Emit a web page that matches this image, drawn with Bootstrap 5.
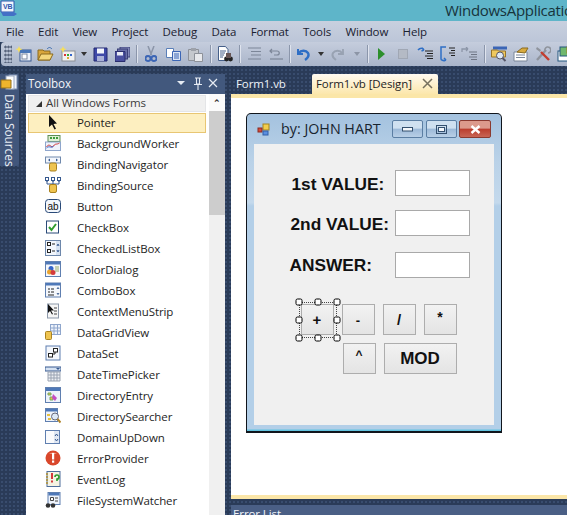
<!DOCTYPE html>
<html lang="en">
<head>
<meta charset="utf-8">
<title>WindowsApplication</title>
<link href="https://cdn.jsdelivr.net/npm/bootstrap@5.3.0/dist/css/bootstrap.min.css" rel="stylesheet">
<style>
html,body{height:515px;width:567px;overflow:hidden;margin:0}
body{font-family:"Open Sans","Noto Sans",sans-serif;font-size:11.5px;letter-spacing:-.1px;color:#1e1e1e;background:#2b3c59}
.dots{height:515px;background-color:#2a3b58;background-image:radial-gradient(#3a4e70 .7px,transparent .8px);background-size:4px 4px}
.ttl{height:21px;background:#5eb5c9;flex:none}
.ttl span{font-size:15px;letter-spacing:-.3px;color:#17333b;margin-left:auto;white-space:nowrap;width:122px;overflow:hidden;line-height:20px}
.mnu{height:21px;background:linear-gradient(#c8d0df,#bcc6d8);flex:none;padding-left:6px;gap:14.3px;line-height:21px;color:#1a2130}
.tbar{height:24px;background:linear-gradient(#c5cddd,#aab5ca);flex:none;padding-left:3px;border-radius:4px 0 0 4px;margin-left:1px}
.tlb{width:22px;height:22px;flex:none}
.arr{flex:none;height:22px}
.arr::after{content:"";border:3.5px solid transparent;border-top:4px solid #333;border-bottom:0}
.arr.off::after{border-top-color:#8c95a6}
.sepv{flex:none;height:22px}
.sepv::after{content:"";width:1px;height:18px;background:#8b96ab;box-shadow:1px 0 #dfe4ee}
.w5{width:5px}.w6{width:6px}.w7{width:7px}.w8{width:8px}.w11{width:11px}.w13{width:13px}.w15{width:15px}
.grip{width:8px;flex:none;height:18px;background:radial-gradient(#58647c 1px,transparent 1.2px) 0 0/3px 4px}
.work{height:449px;padding-top:8px;overflow:hidden}
.rail{width:19px;height:92px;background:#41567b;flex:none;margin-right:7px;border-radius:0 2px 2px 0}
.vtxt{writing-mode:vertical-rl;color:#e8edf5;font-size:12px;line-height:19px;margin-top:3px}
.tbox{width:199px;flex:none;background:#fff}
.thead{height:20px;background:#42587d;color:#f2f5fa;font-size:11.7px;line-height:19px;padding-left:2px}
.tbody{height:427px;overflow:hidden}
.tlist{width:183px;flex:none;padding:1px 2px 0;overflow:hidden}
.tgroup{height:17px;background:#f0f0f0;border:1px solid #e4e5e7;line-height:14px;color:#3c3c3c;margin-bottom:1px;margin-right:1px;padding-left:7px;white-space:nowrap}
.tgroup i{display:inline-block;border-style:solid;border-width:0 0 6px 6px;border-color:transparent transparent #333 transparent;margin-right:4px;width:0;height:0}
.trow{height:21px;line-height:21px;padding-left:17px;gap:16px;white-space:nowrap;margin-right:1px}
.trow svg{width:16px;height:16px;flex:none}
.trow.hot{background:#fdefc0;border:1px solid #e8c673;height:20px;line-height:18px;padding-left:16px}
.tscroll{width:16px;background:#f0f0f0;flex:none}
.tscroll b{display:block;height:17px;color:#333;font-size:9px;text-align:center;line-height:17px;background:#fbfbfb}
.tscroll u{display:block;height:104px;background:#cdcdcd}
.main{margin-left:6px;flex:1;min-width:0}
.tabs{height:20px;line-height:20px;flex:none}
.dtab{color:#eef2f8;padding-left:5px;width:81px;flex:none;white-space:nowrap}
.atab{width:126px;flex:none;background:linear-gradient(#fffaf0,#fce7ac);border-radius:2px 2px 0 0;color:#1e1e1e;padding-left:4px;white-space:nowrap}
.ybar{height:4px;background:#fbe6a8;flex:none}
.canvas{height:397px;background:#fff;position:relative;flex:none}
.ebar{height:6px;flex:none}
.elist{height:10px;background:#4a5f85;color:#f2f5fa;line-height:17px;padding-left:2px;overflow:hidden;flex:none}
.frm{position:absolute;left:15px;top:15px;width:256px;height:320px;border:1.5px solid #10151c;border-bottom-width:2px;border-radius:5px 5px 0 0;background:linear-gradient(#a4c2df,#bad2e8 15%,#c4d9ec 28%,#b3cfe8 29%,#b3cfe8);box-shadow:inset 0 -1.5px #63c3df}
.frmbar{height:30px;padding-left:10px}
.fname{font-size:14.3px;letter-spacing:0;color:#18242f;margin-left:11px;white-space:nowrap;line-height:18px;width:111px}
.wbtn{width:31px;height:18px;border:1px solid #5b7ea3;border-radius:2px;margin-right:2.5px;background:linear-gradient(#cfe0f0 45%,#9cb9d8 50%,#b8cfe6)}
.wbtn.cl{background:linear-gradient(#dc9a8c 45%,#bb3d2d 50%,#c86555);border-color:#8a3a30;width:32px}
.client{position:absolute;left:6.5px;top:29.5px;width:240px;height:281px;background:#f0f0f0}
.lab{position:absolute;font-family:"Liberation Sans",sans-serif;font-weight:700;font-size:17.3px;letter-spacing:0;color:#111;line-height:20px;white-space:nowrap}
.l1{left:38px;top:30px}.l2{left:37px;top:70px}.l3{left:36px;top:111px}
.tbx{position:absolute;left:141px;width:75px;height:26px;background:#fff;border:1px solid #a9a9a9}
.t1{top:26px}.t2{top:66px}.t3{top:108px}
.fbt{position:absolute;border:1px solid #adadad;background:linear-gradient(#f2f2f2,#e4e4e4);font-family:"Liberation Sans",sans-serif;font-weight:700;letter-spacing:0;color:#111;font-size:15px;height:31px;width:33px;line-height:29px;text-align:center}
.b1{left:47px;top:160px}.b2{left:88px;top:160px;line-height:31px;font-size:13px}.b3{left:129px;top:160px}.b4{left:170px;top:160px;line-height:25px;font-size:14px}.b5{left:89px;top:199px;line-height:23px;font-size:12px}.b6{left:130px;top:199px;width:73px;font-size:17px}
.selb{position:absolute;left:45px;top:158px;width:38px;height:36px;border:1px dotted #444}
.hnd{position:absolute;width:7px;height:7px;background:#fff;border:1.2px solid #000;border-radius:2px;transform:translate(-50%,-50%)}
.h1{left:45px;top:158px}.h2{left:64px;top:158px}.h3{left:83px;top:158px}.h4{left:45px;top:176px}.h5{left:83px;top:176px}.h6{left:45px;top:194px}.h7{left:64px;top:194px}.h8{left:83px;top:194px}
</style>
</head>
<body>
<div class="d-flex flex-column dots">
  <div class="ttl d-flex">
    <svg width="17" height="17" viewBox="0 0 17 17" class="ms-0"><path d="M1 1h13v11H1z" fill="#f2f6fd" stroke="#2e56ad"/><path d="M14 12l3 2-3 2H3l-2-4z" fill="#4470c6"/><text x="3" y="9" font-size="7" font-weight="700" fill="#2e56ad" font-family="Liberation Sans">VB</text></svg>
    <span>WindowsApplication</span>
  </div>
  <div class="mnu d-flex">
    <span>File</span><span>Edit</span><span>View</span><span>Project</span><span>Debug</span><span>Data</span><span>Format</span><span>Tools</span><span>Window</span><span>Help</span>
  </div>
  <div class="tbar d-flex align-items-center">
    <div class="grip"></div>
    <div class="tlb d-flex align-items-center justify-content-center"><svg width="17" height="16" viewBox="0 0 17 16"><rect x="5" y="4" width="11" height="11" fill="#eef3fb" stroke="#38598f"/><rect x="5" y="4" width="11" height="3" fill="#4a78b8"/><rect x="7" y="8" width="5" height="5" fill="#fff" stroke="#7c8aa0"/><path d="M4 0l1 2.500L7.500 3 5 4.200 4 7 3 4.200.5 3 3 2.500z" fill="#f7df5a"/></svg></div>
    <div class="tlb d-flex align-items-center justify-content-center"><svg width="17" height="16" viewBox="0 0 17 16"><path d="M1 4h5l1 1h6v9H1z" fill="#d9a63b" stroke="#8b6a1e"/><path d="M1 14l3-6h12l-3 6z" fill="#f4d77c" stroke="#8b6a1e"/><path d="M10 3c2-2 3-2 5 0" fill="none" stroke="#3a6cb0"/></svg></div>
    <div class="tlb d-flex align-items-center justify-content-center"><svg width="17" height="16" viewBox="0 0 17 16"><rect x="3" y="5" width="13" height="10" fill="#f1f1f1" stroke="#8b8f96"/><rect x="5" y="8" width="2" height="2" fill="#d33"/><rect x="8" y="8" width="2" height="2" fill="#3a3"/><rect x="11" y="8" width="2" height="2" fill="#36c"/><rect x="8" y="11" width="2" height="2" fill="#da3"/><path d="M4 0l1 2.500L7.500 3 5 4.200 4 7 3 4.200.5 3 3 2.500z" fill="#f7df5a"/></svg></div>
    <div class="arr w11 d-flex align-items-center justify-content-center"></div>
    <div class="tlb d-flex align-items-center justify-content-center"><svg width="15" height="15" viewBox="0 0 15 15"><path d="M1 1h13v13H1z" fill="#3e49a8" stroke="#23296e"/><rect x="4" y="1.500" width="7" height="5" fill="#f2f5fb"/><rect x="4" y="9" width="7" height="5" fill="#aab2d8"/></svg></div>
    <div class="tlb d-flex align-items-center justify-content-center"><svg width="15" height="15" viewBox="0 0 15 15"><rect x="5" y="0" width="10" height="10" fill="#8187b8" stroke="#3b4078"/><rect x="2.500" y="2" width="10" height="10" fill="#6a70aa" stroke="#3b4078"/><path d="M0 4.500h10v10H0z" fill="#4a50a0" stroke="#2a2e6e"/><rect x="2" y="5" width="6" height="3.500" fill="#e7eaf5"/></svg></div>
    <div class="sepv w7 d-flex align-items-center justify-content-center"></div>
    <div class="tlb d-flex align-items-center justify-content-center"><svg width="12" height="16" viewBox="0 0 12 16"><path d="M3 0l3.500 9M9 0L5.500 9" stroke="#8b95a8" stroke-width="1.500"/><circle cx="3" cy="12.500" r="2.500" fill="none" stroke="#3b65b5" stroke-width="1.800"/><circle cx="9" cy="12.500" r="2.500" fill="none" stroke="#3b65b5" stroke-width="1.800"/></svg></div>
    <div class="tlb d-flex align-items-center justify-content-center"><svg width="15" height="13" viewBox="0 0 15 13"><path d="M.5.500h7v9h-7z" fill="#fff" stroke="#5a7fb8"/><path d="M6.500 3.500h8v9h-8z" fill="#dbe6f6" stroke="#3b65b5"/><path d="M8 6h5M8 8h5M8 10h5" stroke="#3b65b5"/></svg></div>
    <div class="tlb d-flex align-items-center justify-content-center"><svg width="15" height="15" viewBox="0 0 15 15"><path d="M.5 2.500h10v11H.5z" fill="#c5c8cd" stroke="#8d9199"/><rect x="3" y="1" width="5" height="3" fill="#9ea2aa"/><path d="M6.500 6.500h8v8h-8z" fill="#e8e9ec" stroke="#8d9199"/></svg></div>
    <div class="sepv w8 d-flex align-items-center justify-content-center"></div>
    <div class="tlb d-flex align-items-center justify-content-center"><svg width="16" height="16" viewBox="0 0 16 16"><path d="M1.500.500h7l2.500 3v11H1.500z" fill="#fff" stroke="#46608a"/><path d="M3 5h6M3 7h5M3 9h4M3 11h3" stroke="#46608a"/><circle cx="9.500" cy="13" r="2.400" fill="#222"/><circle cx="13.500" cy="13" r="2.400" fill="#222"/><path d="M9 7h5v5H9z" fill="#655"/></svg></div>
    <div class="sepv w7 d-flex align-items-center justify-content-center"></div>
    <div class="tlb d-flex align-items-center justify-content-center"><svg width="15" height="14" viewBox="0 0 15 14"><path d="M1 1h13M4 4.500h10M4 8h10M1 12h13" stroke="#7c8698" stroke-width="1.200"/></svg></div>
    <div class="tlb d-flex align-items-center justify-content-center"><svg width="15" height="14" viewBox="0 0 15 14"><path d="M1 4h7c3 0 3 4 0 4H5M3 2L1 4l2 2" fill="none" stroke="#7c8698" stroke-width="1.200"/><path d="M1 12h13" stroke="#7c8698" stroke-width="1.200"/></svg></div>
    <div class="sepv w5 d-flex align-items-center justify-content-center"></div>
    <div class="tlb d-flex align-items-center justify-content-center"><svg width="14" height="14" viewBox="0 0 14 14"><path d="M2 2v5h5" fill="none" stroke="#2f6fc5" stroke-width="2"/><path d="M2.500 6.500C5 3 10 3 12 6c1.500 3 0 5-3 7" fill="none" stroke="#2f6fc5" stroke-width="2.400"/></svg></div>
    <div class="arr w13 d-flex align-items-center justify-content-center"></div>
    <div class="tlb d-flex align-items-center justify-content-center"><svg width="14" height="14" viewBox="0 0 14 14"><path d="M12 2v5H7" fill="none" stroke="#98a2b2" stroke-width="1.800"/><path d="M11.500 6.500C9 3 4 3 2 6c-1.500 3 0 5 3 7" fill="none" stroke="#98a2b2" stroke-width="2"/></svg></div>
    <div class="arr off w15 d-flex align-items-center justify-content-center"></div>
    <div class="sepv w6 d-flex align-items-center justify-content-center"></div>
    <div class="tlb d-flex align-items-center justify-content-center"><svg width="7" height="12" viewBox="0 0 7 12"><path d="M0 0l7 6-7 6z" fill="#2c8f2c"/></svg></div>
    <div class="tlb d-flex align-items-center justify-content-center"><svg width="10" height="10" viewBox="0 0 10 10"><rect width="9" height="9" x=".5" y=".5" fill="#b4bac5" stroke="#a0a7b4"/></svg></div>
    <div class="tlb d-flex align-items-center justify-content-center"><svg width="16" height="14" viewBox="0 0 16 14"><path d="M8 4h8M10 6.500h6M8 9h8M10 11.500h6" stroke="#222"/><path d="M1 3c2-2.500 5-2.500 6 0M7 3L5 1M7 3L4.500 4" fill="none" stroke="#2f6fc5" stroke-width="1.500"/></svg></div>
    <div class="tlb d-flex align-items-center justify-content-center"><svg width="16" height="16" viewBox="0 0 16 16"><path d="M10 2h6M12 4.500h4M10 7h6M12 9.500h4" stroke="#222"/><path d="M7 1H2v12c0 1 2 2 5 1M7 14l-2-2M7 14l-2.500 1" fill="none" stroke="#2f6fc5" stroke-width="1.500"/></svg></div>
    <div class="tlb d-flex align-items-center justify-content-center"><svg width="16" height="14" viewBox="0 0 16 14"><path d="M8 5h8M10 7.500h6M8 10h8M10 12.500h6" stroke="#6f7685"/><path d="M1 5V2h6M7 2L5 0M7 2L5 4" fill="none" stroke="#8c96a8" stroke-width="1.300"/></svg></div>
    <div class="sepv w8 d-flex align-items-center justify-content-center"></div>
    <div class="tlb d-flex align-items-center justify-content-center"><svg width="16" height="16" viewBox="0 0 16 16"><path d="M2 .5h14v3H2z" fill="#3b65b5"/><path d="M.5 4h6l1 1h7v6h-14z" fill="#efc95f" stroke="#97752a"/><circle cx="9" cy="9.500" r="3.500" fill="#dce8f6" stroke="#556"/><path d="M11.500 12l3 3" stroke="#556" stroke-width="2"/></svg></div>
    <div class="tlb d-flex align-items-center justify-content-center"><svg width="16" height="15" viewBox="0 0 16 15"><path d="M1 5h13v9H1z" fill="#fff" stroke="#7a8699"/><path d="M3 8h9M3 10.500h9" stroke="#7a8699"/><path d="M4 5l5-4h6l-3 5z" fill="#d9ab3f" stroke="#8a6b20"/></svg></div>
    <div class="tlb d-flex align-items-center justify-content-center"><svg width="16" height="16" viewBox="0 0 16 16"><path d="M2 14L11 4" stroke="#8f949d" stroke-width="2.400"/><path d="M10 5a3 3 0 1 1 3 2" fill="none" stroke="#8f949d" stroke-width="1.600"/><path d="M14 14L6 6" stroke="#c33d2e" stroke-width="2.400"/><path d="M2 1l4 3-1 2-4-3z" fill="#8f949d"/></svg></div>
    <div class="tlb d-flex align-items-center justify-content-center"><svg width="16" height="16" viewBox="0 0 16 16"><rect x="1" y="5" width="10" height="10" fill="#fff" stroke="#23567f"/><rect x="3" y="1" width="9" height="9" fill="#6fb76d" stroke="#23567f"/><rect x="10" y="1" width="6" height="6" fill="#f2d24c" stroke="#a08123"/></svg></div>
  </div>
  <div class="work d-flex flex-grow-1">
    <div class="rail text-center"><svg width="18" height="17" viewBox="0 0 18 17" class="d-block"><rect x="9" y="1" width="8" height="14" fill="#eef3fb" stroke="#7a8db0"/><rect x="6" y="2" width="8" height="13" fill="#fff" stroke="#9aa8c2"/><path d="M1 6h10v8H1z" fill="#eeb52d" stroke="#96701a"/></svg><div class="vtxt">Data Sources</div></div>
    <div class="tbox d-flex flex-column">
      <div class="thead d-flex align-items-center"><span>Toolbox</span>
        <svg class="ms-auto me-1" width="44" height="14" viewBox="0 0 44 14"><path d="M0 4h8L4 8z" fill="#e6ebf3"/><path d="M18 1h6M19.500 1v6h3V1M17 7.500h8M21 8v5" fill="none" stroke="#e6ebf3" stroke-width="1.100"/><path d="M32 2l8 8M40 2l-8 8" stroke="#e6ebf3" stroke-width="1.200"/></svg>
      </div>
      <div class="tbody d-flex">
        <div class="tlist">
          <div class="tgroup"><i></i>All Windows Forms</div>
          <div class="trow hot d-flex align-items-center"><svg viewBox="0 0 16 16"><path d="M4 0v12l3-2.500 2.500 5 1.500-.8-2.500-4.700 3.500-.5z" fill="#111"/></svg><span>Pointer</span></div>
          <div class="trow d-flex align-items-center"><svg viewBox="0 0 16 16"><rect x="3" y=".5" width="12" height="6" fill="#dff0d4" stroke="#5e8e56"/><path d="M5 3h2M8 3h2M11 3h2" stroke="#3b9b3b" stroke-width="2"/><rect x=".5" y="7" width="15" height="8.500" fill="#eef3fb" stroke="#8fa6cc"/><path d="M1.500 12c3-5 5 2 7-1s3-1 6-3" fill="none" stroke="#c33" stroke-width="1"/><path d="M1.500 13c3-3 5 1 7-2" fill="none" stroke="#36c"/></svg><span>BackgroundWorker</span></div>
          <div class="trow d-flex align-items-center"><svg viewBox="0 0 16 16"><rect x=".5" y="1" width="15" height="6" fill="#f4f7fc" stroke="#7089ad"/><path d="M5 2.500L3 4l2 1.500zM11 2.500L13 4l-2 1.500z" fill="#36598f"/><rect x="4.500" y="7" width="7" height="8" rx="1.500" fill="#efc450" stroke="#a98220"/></svg><span>BindingNavigator</span></div>
          <div class="trow d-flex align-items-center"><svg viewBox="0 0 16 16"><path d="M1 4h2M7 4h2M13 4h2M2 4v3h12V4M8 4v3" fill="none" stroke="#36598f"/><rect x=".5" y=".5" width="3" height="3" fill="#fff" stroke="#36598f"/><rect x="6.500" y=".5" width="3" height="3" fill="#fff" stroke="#36598f"/><rect x="12.500" y=".5" width="3" height="3" fill="#fff" stroke="#36598f"/><rect x="4.500" y="7.500" width="7" height="8" rx="1.500" fill="#efc450" stroke="#a98220"/></svg><span>BindingSource</span></div>
          <div class="trow d-flex align-items-center"><svg viewBox="0 0 16 16"><rect x=".5" y="1.500" width="15" height="13" rx="3" fill="#f3f7fc" stroke="#2a4a78"/><text x="8" y="11.500" text-anchor="middle" font-size="10" fill="#111" font-family="Liberation Sans">ab</text></svg><span>Button</span></div>
          <div class="trow d-flex align-items-center"><svg viewBox="0 0 16 16"><rect x="1.500" y="2" width="12" height="12" fill="#fff" stroke="#2a4a78"/><path d="M4 8l2.500 3 4.500-6" fill="none" stroke="#2f9d2f" stroke-width="2"/></svg><span>CheckBox</span></div>
          <div class="trow d-flex align-items-center"><svg viewBox="0 0 16 16"><rect x=".5" y=".5" width="15" height="15" fill="#f2f6fc" stroke="#6d87ab"/><rect x="2.500" y="2.500" width="3" height="3" fill="#fff" stroke="#222"/><rect x="2.500" y="9.500" width="3" height="3" fill="#fff" stroke="#222"/><path d="M7 4h3M7 11h3" stroke="#222"/><rect x="11" y="1" width="4" height="14" fill="#d6e2f2"/><path d="M12 6l1-2 1 2M12 10l1 2 1-2" fill="none" stroke="#36598f"/></svg><span>CheckedListBox</span></div>
          <div class="trow d-flex align-items-center"><svg viewBox="0 0 16 16"><rect x=".5" y=".5" width="15" height="15" fill="#f4f7fc" stroke="#5f7fb0"/><rect x="1" y="1" width="14" height="2.500" fill="#4e78b8"/><circle cx="6" cy="7.500" r="2.500" fill="#3465c9"/><circle cx="4.500" cy="11" r="2.500" fill="#e9a42f"/><circle cx="8" cy="11.500" r="2.500" fill="#d43a3a"/><path d="M10 6h4M10 8h4M10 10h4" stroke="#9a6"/></svg><span>ColorDialog</span></div>
          <div class="trow d-flex align-items-center"><svg viewBox="0 0 16 16"><rect x=".5" y="1" width="15" height="14" fill="#f4f7fc" stroke="#5f7fb0"/><rect x="1" y="1" width="14" height="2.500" fill="#4e78b8"/><path d="M3 7h2M6 7h3M3 10h2M6 10h3M3 13h6" stroke="#222"/><path d="M12 7l1-1.500L14 7M12 11l1 1.500 1-1.500" fill="none" stroke="#36598f"/></svg><span>ComboBox</span></div>
          <div class="trow d-flex align-items-center"><svg viewBox="0 0 16 16"><rect x="2.500" y="1" width="11" height="14" fill="#f6f6f6" stroke="#8d99aa"/><path d="M9 5h3M9 8h3M9 11h3" stroke="#444"/><path d="M3 1v9l2-2 2 3.500 1-.5-2-3.500h3z" fill="#111"/></svg><span>ContextMenuStrip</span></div>
          <div class="trow d-flex align-items-center"><svg viewBox="0 0 16 16"><rect x="5.500" y=".5" width="10" height="10" fill="#eef3fb" stroke="#8fa6cc"/><path d="M9 1v9M12.500 1v9M6 4h9M6 7h9" stroke="#8fa6cc"/><rect x=".5" y="7.500" width="6" height="8" rx="1" fill="#efc450" stroke="#a98220"/></svg><span>DataGridView</span></div>
          <div class="trow d-flex align-items-center"><svg viewBox="0 0 16 16"><rect x="1" y="1" width="14" height="14" fill="#f4f7fc" stroke="#5f7fb0"/><rect x="3.500" y="8.500" width="4" height="3.500" fill="#fff" stroke="#222"/><rect x="8.500" y="3.500" width="4" height="3.500" fill="#fff" stroke="#222"/><path d="M7.500 9H10V7" fill="none" stroke="#222"/></svg><span>DataSet</span></div>
          <div class="trow d-flex align-items-center"><svg viewBox="0 0 16 16"><rect x="0" y="1" width="16" height="4" fill="#d6e2f2" stroke="#36598f"/><path d="M11 2h4l-2 2z" fill="#36598f"/><path d="M3 6h12v9H3z" fill="#eef0f4" stroke="#9aa3b2"/><path d="M6 6v9M9 6v9M12 6v9M3 9h12M3 12h12" stroke="#9aa3b2"/></svg><span>DateTimePicker</span></div>
          <div class="trow d-flex align-items-center"><svg viewBox="0 0 16 16"><rect x=".5" y=".5" width="15" height="15" fill="#eef3fb" stroke="#5f7fb0"/><rect x="1" y="1" width="14" height="3" fill="#4e78b8"/><path d="M3 6h3v2H3zM5 10h3v3H5z" fill="#e6c040" stroke="#7a6"/><path d="M8 7l4 4-2 3-3-3z" fill="#c54fc2"/></svg><span>DirectoryEntry</span></div>
          <div class="trow d-flex align-items-center"><svg viewBox="0 0 16 16"><rect x=".5" y=".5" width="12" height="13" fill="#eef3fb" stroke="#5f7fb0"/><rect x="1" y="1" width="11" height="2.500" fill="#4e78b8"/><path d="M2 6h3v2H2zM3 10h3v2H3z" fill="#e6c040"/><circle cx="10" cy="8.500" r="3.500" fill="#dce8f6" stroke="#667"/><path d="M12.500 11l3 3.500" stroke="#b0852c" stroke-width="2"/></svg><span>DirectorySearcher</span></div>
          <div class="trow d-flex align-items-center"><svg viewBox="0 0 16 16"><rect x=".5" y="1.500" width="14" height="13" fill="#fafbfd" stroke="#5f7fb0"/><rect x="9" y="2" width="5" height="12" fill="#dfe7f3"/><path d="M10 7l1.500-2L13 7M10 10l1.500 2 1.500-2" fill="none" stroke="#36598f"/></svg><span>DomainUpDown</span></div>
          <div class="trow d-flex align-items-center"><svg viewBox="0 0 16 16"><circle cx="8" cy="8" r="7.500" fill="#d9472b"/><path d="M4 4a6 6 0 0 1 8 0z" fill="#ef9a80"/><rect x="7" y="3" width="2.200" height="6.500" fill="#fff"/><rect x="7" y="10.500" width="2.200" height="2.200" fill="#fff"/></svg><span>ErrorProvider</span></div>
          <div class="trow d-flex align-items-center"><svg viewBox="0 0 16 16"><rect x="2" y=".5" width="13" height="15" fill="#f5f3e2" stroke="#4f6e9c"/><path d="M1 3h2M1 6h2M1 9h2M1 12h2" stroke="#b08d2c" stroke-width="1.500"/><path d="M6 2h2v6H6zM6 9.500h2v2H6z" fill="#d43a3a"/><path d="M10 6a2 2 0 1 1 2 2v2" fill="none" stroke="#2f9d2f" stroke-width="1.700"/></svg><span>EventLog</span></div>
          <div class="trow d-flex align-items-center"><svg viewBox="0 0 16 16"><rect x="3" y=".5" width="12" height="12" fill="#eef3fb" stroke="#5f7fb0"/><rect x="3.500" y="1" width="11" height="2.500" fill="#4e78b8"/><path d="M5.500 5.500h3v3h-3z" fill="#fff" stroke="#444"/><path d="M10 6h3M10 9h3" stroke="#444"/><circle cx="3" cy="13.500" r="2.300" fill="#333"/><circle cx="8" cy="13.500" r="2.300" fill="#333"/></svg><span>FileSystemWatcher</span></div>
        </div>
        <div class="tscroll"><b>&#8963;</b><u></u></div>
      </div>
    </div>
    <div class="main d-flex flex-column">
      <div class="tabs d-flex">
        <div class="dtab">Form1.vb</div>
        <div class="atab d-flex align-items-center"><span>Form1.vb [Design]</span><svg class="ms-auto me-1" width="13" height="12" viewBox="0 0 13 12"><path d="M2 1l9 9M11 1l-9 9" stroke="#76705e" stroke-width="1.500"/></svg></div>
      </div>
      <div class="ybar"></div>
      <div class="canvas">
        <div class="frm">
          <div class="frmbar d-flex align-items-center">
            <svg width="13" height="13" viewBox="0 0 13 13"><rect x="6" y="1" width="6" height="6" fill="#f2cd4d" stroke="#a5851f"/><rect x="1" y="5" width="4" height="4" fill="#d64a3a" stroke="#8c2a20"/><rect x="6" y="8" width="5" height="4" fill="#5a8fe0" stroke="#325fa8"/></svg>
            <span class="fname">by: JOHN HART</span>
            <div class="wbtn d-flex align-items-center justify-content-center"><svg width="11" height="6" viewBox="0 0 11 6"><rect x=".5" y="1.500" width="10" height="3.500" fill="#f4f7fb" stroke="#34506f"/></svg></div>
            <div class="wbtn d-flex align-items-center justify-content-center"><svg width="11" height="9" viewBox="0 0 11 9"><rect x=".5" y=".5" width="10" height="8" fill="none" stroke="#34506f"/><rect x="2.500" y="2.500" width="6" height="4" fill="#f4f7fb" stroke="#34506f"/></svg></div>
            <div class="wbtn cl d-flex align-items-center justify-content-center"><svg width="11" height="9" viewBox="0 0 11 9"><path d="M1.500 1l8 7M9.500 1l-8 7" stroke="#fff" stroke-width="2.400"/></svg></div>
          </div>
          <div class="client">
            <div class="lab l1">1st VALUE:</div>
            <div class="lab l2">2nd VALUE:</div>
            <div class="lab l3">ANSWER:</div>
            <div class="tbx t1"></div>
            <div class="tbx t2"></div>
            <div class="tbx t3"></div>
            <div class="selb"></div>
            <div class="fbt b1">+</div>
            <div class="fbt b2">-</div>
            <div class="fbt b3">/</div>
            <div class="fbt b4">*</div>
            <div class="fbt b5">^</div>
            <div class="fbt b6">MOD</div>
            <div class="hnd h1"></div><div class="hnd h2"></div><div class="hnd h3"></div>
            <div class="hnd h4"></div><div class="hnd h5"></div>
            <div class="hnd h6"></div><div class="hnd h7"></div><div class="hnd h8"></div>
          </div>
        </div>
      </div>
      <div class="ybar"></div>
      <div class="ebar"></div>
      <div class="elist">Error List</div>
    </div>
  </div>
</div>
<script src="https://cdn.jsdelivr.net/npm/bootstrap@5.3.0/dist/js/bootstrap.bundle.min.js"></script>
</body>
</html>
